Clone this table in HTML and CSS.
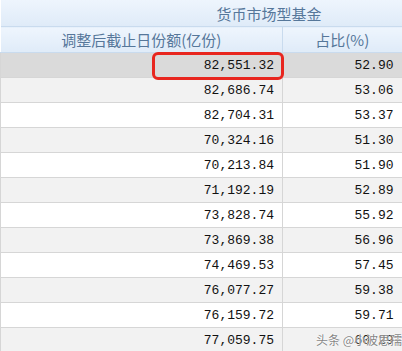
FILE: index.html
```html
<!DOCTYPE html>
<html lang="zh">
<head>
<meta charset="utf-8">
<link rel="stylesheet" href="styles.css">
</head>
<body>
<div class="wrap">
  <table class="grid">
    <colgroup><col class="c1"><col class="c2"></colgroup>
    <thead>
      <tr class="h1"><th colspan="2"><span class="title">货币市场型基金</span></th></tr>
      <tr class="h2"><th>调整后截止日份额(亿份)</th><th>占比(%)</th></tr>
    </thead>
    <tbody>
      <tr class="sel"><td>82,551.32</td><td>52.90</td></tr>
      <tr><td>82,686.74</td><td>53.06</td></tr>
      <tr><td>82,704.31</td><td>53.37</td></tr>
      <tr><td>70,324.16</td><td>51.30</td></tr>
      <tr><td>70,213.84</td><td>51.90</td></tr>
      <tr><td>71,192.19</td><td>52.89</td></tr>
      <tr><td>73,828.74</td><td>55.92</td></tr>
      <tr><td>73,869.38</td><td>56.96</td></tr>
      <tr><td>74,469.53</td><td>57.45</td></tr>
      <tr><td>76,077.27</td><td>59.38</td></tr>
      <tr><td>76,159.72</td><td>59.71</td></tr>
      <tr><td>77,059.75</td><td>60.29</td></tr>
    </tbody>
  </table>
  <div class="mark"></div>
  <div class="watermark">头条 @小波思孺</div>
</div>
</body>
</html>
```

FILE: styles.css
```css
html, body {
  margin: 0;
  padding: 0;
  background: #ffffff;
}
.wrap {
  position: relative;
  width: 402px;
  height: 351px;
  overflow: hidden;
}
.grid {
  border-collapse: collapse;
  table-layout: fixed;
  width: 401px;
}
.c1 { width: 282px; }
.c2 { width: 119px; }
.grid th {
  font-family: "Noto Sans CJK SC", "Noto Sans", sans-serif;
  font-weight: normal;
  font-size: 15px;
  color: #56779a;
  padding: 0;
  text-align: center;
  background: linear-gradient(#eef5fd, #dfebf8);
  border: 1px solid #c9dbee;
  border-top: none;
  border-left: none;
}
.h1 th {
  height: 26px;
  text-align: left;
  border-right: none;
}
.title {
  display: inline-block;
  margin-left: 216px;
}
.h2 th {
  height: 25px;
}
.h2 th:last-child { border-right: none; }
.grid td {
  font-family: "Liberation Mono", "DejaVu Sans Mono", monospace;
  font-size: 13px;
  color: #111111;
  height: 24px;
  padding: 0 8px 0 0;
  text-align: right;
  border-bottom: 1px solid #d6d6d6;
  border-right: 1px solid #d6d6d6;
  border-left: 1px solid #d6d6d6;
  background: #ffffff;
}
.grid td:last-child { border-right: none; }
.grid tbody tr:nth-child(even) td { background: #f2f2f2; }
.grid tbody tr.sel td { background: #dadada; }
.mark {
  position: absolute;
  left: 152px;
  top: 52px;
  width: 126px;
  height: 22px;
  border: 3px solid #e8261f;
  border-radius: 6px;
}
.watermark {
  position: absolute;
  left: 316px;
  top: 331px;
  font-family: "Noto Sans CJK SC", sans-serif;
  font-size: 12px;
  color: rgba(110, 110, 110, 0.85);
  text-shadow: 0 0 2px #ffffff, 0 0 1px #ffffff;
  white-space: nowrap;
}
```
